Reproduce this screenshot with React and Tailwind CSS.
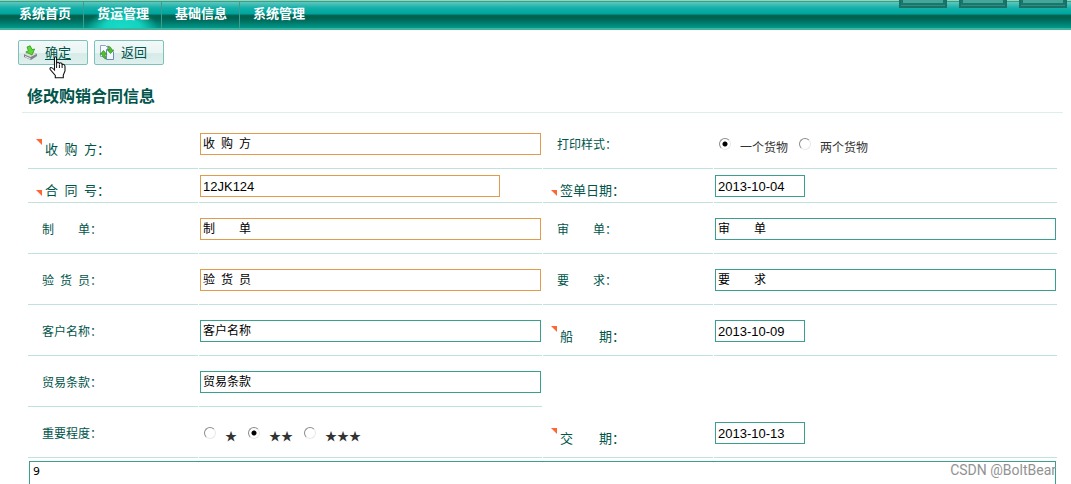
import { useState } from 'react';

const navItems = [
  { key: 'home', label: '系统首页' },
  { key: 'cargo', label: '货运管理' },
  { key: 'basic', label: '基础信息' },
  { key: 'system', label: '系统管理' },
];

function Header() {
  const [active, setActive] = useState('cargo');

  return (
    <header className="relative h-[30px] border-t border-[#a5cfa8] bg-[#00a49c]">
      <nav className="flex h-[29px] border-t border-[#1fa79c] border-b-2 border-b-[#3fb5a0] bg-[linear-gradient(to_bottom,#62c6be_0px,#12b0a8_6px,#00a49c_12px,#00695a_13px,#00604c_15px,#006b5c_18px,#00988a_26px)] pl-[6px]">
        {navItems.map((item, i) => (
          <a
            key={item.key}
            href={`#${item.key}`}
            onClick={() => setActive(item.key)}
            className={`flex items-center pr-3 pb-0.5 pl-[13px] text-[13px] leading-5 font-bold text-white ${
              i < navItems.length - 1 ? 'border-r border-[#3f9c8e]' : ''
            } ${
              active === item.key
                ? 'bg-[radial-gradient(ellipse_36px_20px_at_bottom,#16dcc8_0%,#14d2c0_50%,transparent_100%)]'
                : ''
            }`}
          >
            {item.label}
          </a>
        ))}
      </nav>
      {/* Lower edge of the banner shortcuts */}
      <div className="absolute -top-px right-1 flex gap-3">
        {[0, 1, 2].map((n) => (
          <span key={n} className="h-2 w-12 border-x-2 border-b-2 border-[#1b6f66] bg-[#2b8e80]">
            <span className="block h-[5px] border-x-2 border-b-2 border-[#17776b] bg-[#45a598]" />
          </span>
        ))}
      </div>
    </header>
  );
}

function SaveIcon() {
  return (
    <svg viewBox="0 0 16 16" className="h-4 w-4" aria-hidden="true">
      <path d="M1 9.5 L8 6.5 L14 9 L14 11 L8 15 L1 12 Z" fill="#7f8585" />
      <path d="M1.5 9.5 L8 6.5 L13.5 9 L7.5 12 Z" fill="#dcdfdf" />
      <path d="M2 11 L7.5 13.2 V14.2 L2 12 Z" fill="#f4f4f4" />
      <path d="M4 2 L7.2 0.8 L9 4.6 L11.6 4 L9 10 L2.8 7 L5.4 5.8 Z" fill="#5fd836" stroke="#2f9a1c" strokeWidth="0.8" />
    </svg>
  );
}

function BackIcon() {
  return (
    <svg viewBox="0 0 16 16" className="h-4 w-4" aria-hidden="true">
      <path d="M1.5 0.5 H6.5 L8.5 2.5 V11.5 H1.5 Z" fill="#f7faff" stroke="#8fa3c4" />
      <path d="M7.5 4.5 H12 L14.5 7 V14.5 H7.5 Z" fill="#f2f6ff" stroke="#7089b5" />
      <path d="M4.5 5.5 L7.8 9.3 H6 C6 11 6.3 12.4 7 14 C4.6 13.4 3.3 11.6 3.2 9.3 H1.2 Z" fill="#52c230" stroke="#2b8f1b" strokeWidth="0.7" />
      <path d="M11.5 8.5 L8.5 5 H10 C10 3.5 9.6 2.2 8.4 1.2 C11 1.2 12.6 2.8 12.8 5 H14.8 Z" fill="#52c230" stroke="#2b8f1b" strokeWidth="0.7" />
    </svg>
  );
}

function HandCursor() {
  return (
    <svg viewBox="0 0 17 23" className="h-[23px] w-[17px]" aria-hidden="true">
      <path
        d="M5.5 14 V2 Q5.5 0.7 6.5 0.7 Q7.6 0.7 7.6 2 V8 Q7.8 6.2 9 6.2 Q10.3 6.2 10.4 8 Q10.8 6.8 11.8 6.8 Q13 6.8 13.1 9 Q13.5 8 14.3 8.2 Q16 8.5 16 10.5 V15 L14.3 19 V21.8 H6.3 V19.5 L1.2 13.5 Q0.6 12 1.8 11.5 Q3 11.2 5.5 14 Z"
        fill="#fff"
        stroke="#111"
        strokeWidth="1.1"
      />
      <path d="M7.6 8 V12 M10.4 8.5 V12 M13.1 9 V12" stroke="#111" strokeWidth="1" />
    </svg>
  );
}

function ToolButton({ icon: Icon, underline, children }) {
  return (
    <button
      type="button"
      className="flex h-[25px] cursor-pointer items-center gap-1.5 rounded-[2px] border border-[#7cc2ba] bg-[linear-gradient(to_bottom,#f2f9f8_0%,#eaf5f4_50%,#d6ebe8_55%,#dff0ee_100%)] pr-4 pl-1 text-[13px] text-[#00554a]"
    >
      <Icon />
      <span className={underline ? 'underline underline-offset-2' : ''}>{children}</span>
    </button>
  );
}

function Cell({ empty, children }) {
  return <div className={`flex items-start ${empty ? '' : 'border-b border-[#bfe2dc]'}`}>{children}</div>;
}

// Required fields carry an orange corner and a slightly larger caption
function Caption({ id, required, compact, children }) {
  const Tag = id ? 'label' : 'span';
  if (!required) {
    return (
      <Tag htmlFor={id} className="pt-[19px] pl-3.5 text-xs whitespace-pre text-[#00554a]">
        {children}：
      </Tag>
    );
  }
  return (
    <>
      <svg viewBox="0 0 6 6" className="mt-[21px] ml-2 h-1.5 w-1.5 shrink-0" aria-hidden="true">
        <path d="M0 0 H6 V6 Z" fill="#ff6633" />
      </svg>
      <Tag
        htmlFor={id}
        className={`pl-[3px] text-[13px] leading-4 whitespace-pre text-[#00554a] ${compact ? 'pt-3.5' : 'pt-6'}`}
      >
        {children}：
      </Tag>
    </>
  );
}

const boxTone = {
  orange: 'border-[#e09c4c]',
  teal: 'border-[#3a9f8f]',
};

const boxSize = {
  full: 'w-full mt-[15px] text-xs pb-1 pl-0.5',
  medium: 'w-[300px] mt-1.5 text-[13px] pl-0.5',
  date: 'w-[90px] mt-[15px] text-[13px] pl-0.5',
  dateCompact: 'w-[90px] mt-1.5 text-[13px] pl-0.5',
};

function TextBox({ id, tone = 'teal', size = 'full', value }) {
  return (
    <div className="flex w-full pr-px pl-px">
      <input
        id={id}
        type="text"
        defaultValue={value}
        className={`h-[22px] border bg-white text-black outline-none ${boxTone[tone]} ${boxSize[size]}`}
      />
    </div>
  );
}

function RadioGroup({ name, options, checked }) {
  return (
    <div className="flex gap-[11px] pt-5 pl-[5px]">
      {options.map((option) => (
        <label key={option} className="flex items-start gap-[9px] text-xs text-[#333]">
          <input
            type="radio"
            name={name}
            defaultChecked={option === checked}
            className="h-3 w-3 appearance-none rounded-full border border-[#ece8e4] border-t-[#8c8c8c] border-l-[#8c8c8c] bg-white checked:bg-[radial-gradient(circle,#000_2px,#fff_3px)]"
          />
          <span className="pt-0.5">{option}</span>
        </label>
      ))}
    </div>
  );
}

export default function App() {
  return (
    <div className="h-screen overflow-hidden bg-white font-['Liberation_Sans','Noto_Sans_CJK_SC',sans-serif]">
      <Header />

      <div className="relative flex gap-1.5 pt-2.5 pl-[18px]">
        <ToolButton icon={SaveIcon} underline>确定</ToolButton>
        <ToolButton icon={BackIcon}>返回</ToolButton>
        <div className="pointer-events-none absolute top-[26px] left-[49px]">
          <HandCursor />
        </div>
      </div>

      <h1 className="mr-2 ml-[22px] border-b border-[#dcefec] pt-5 pb-[3px] pl-[5px] text-base font-bold text-[#00554a]">
        修改购销合同信息
      </h1>

      <form className="mt-[5px] mr-3.5 ml-7">
        <div className="grid auto-rows-[51px] grid-cols-[170px_1fr_170px_1fr] grid-rows-[51px_34px] gap-x-px">
          <Cell><Caption id="buyer" required>收&ensp;购&ensp;方</Caption></Cell>
          <Cell><TextBox id="buyer" tone="orange" value={'收\u2002购\u2002方'} /></Cell>
          <Cell><Caption>打印样式</Caption></Cell>
          <Cell><RadioGroup name="printStyle" options={['一个货物', '两个货物']} checked="一个货物" /></Cell>

          <Cell><Caption id="contractNo" required compact>合&ensp;同&ensp;号</Caption></Cell>
          <Cell><TextBox id="contractNo" tone="orange" size="medium" value="12JK124" /></Cell>
          <Cell><Caption id="signDate" required compact>签单日期</Caption></Cell>
          <Cell><TextBox id="signDate" size="dateCompact" value="2013-10-04" /></Cell>

          <Cell><Caption id="maker">制&emsp;&emsp;单</Caption></Cell>
          <Cell><TextBox id="maker" tone="orange" value={'制\u2003\u2003单'} /></Cell>
          <Cell><Caption id="checker">审&emsp;&emsp;单</Caption></Cell>
          <Cell><TextBox id="checker" value={'审\u2003\u2003单'} /></Cell>

          <Cell><Caption id="inspector">验&ensp;货&ensp;员</Caption></Cell>
          <Cell><TextBox id="inspector" tone="orange" value={'验\u2002货\u2002员'} /></Cell>
          <Cell><Caption id="request">要&emsp;&emsp;求</Caption></Cell>
          <Cell><TextBox id="request" value={'要\u2003\u2003求'} /></Cell>

          <Cell><Caption id="customer">客户名称</Caption></Cell>
          <Cell><TextBox id="customer" value="客户名称" /></Cell>
          <Cell><Caption id="shipDate" required>船&emsp;&emsp;期</Caption></Cell>
          <Cell><TextBox id="shipDate" size="date" value="2013-10-09" /></Cell>

          <Cell><Caption id="terms">贸易条款</Caption></Cell>
          <Cell><TextBox id="terms" value="贸易条款" /></Cell>
          <Cell empty />
          <Cell empty />

          <Cell><Caption>重要程度</Caption></Cell>
          <Cell><RadioGroup name="importance" options={['★', '★★', '★★★']} checked="★★" /></Cell>
          <Cell><Caption id="deliveryDate" required>交&emsp;&emsp;期</Caption></Cell>
          <Cell><TextBox id="deliveryDate" size="date" value="2013-10-13" /></Cell>
        </div>

        <div className="px-px pt-[3px]">
          <textarea
            aria-label="说明"
            rows={4}
            defaultValue="9"
            className="block w-full resize-none border border-[#3a9f8f] px-[3px] py-0.5 font-['DejaVu_Sans',sans-serif] text-[11px] leading-4 text-black outline-none"
          />
        </div>
      </form>

      <span className="absolute right-[15px] bottom-1 font-['Roboto',sans-serif] text-sm text-[#929292]">
        CSDN @BoltBear
      </span>
    </div>
  );
}
